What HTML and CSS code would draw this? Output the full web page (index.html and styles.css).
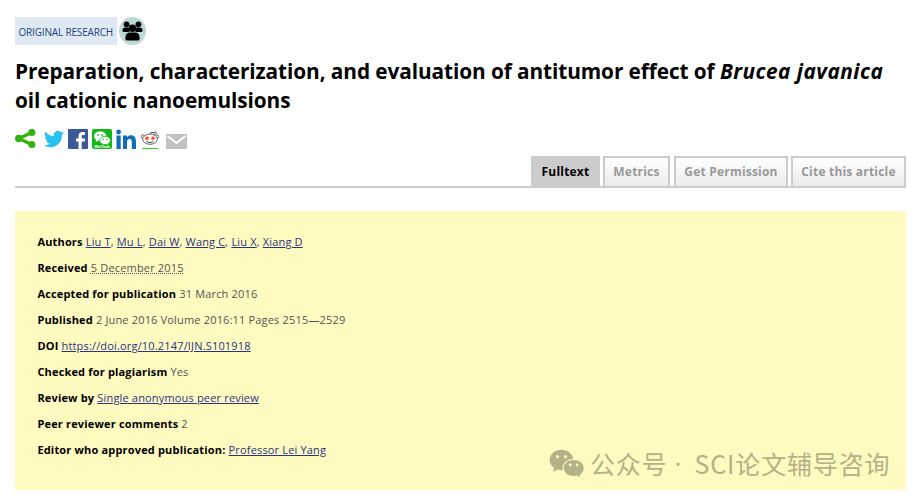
FILE: index.html
```
<!DOCTYPE html>
<html lang="en">
<head>
  <meta charset="UTF-8">
  <title>Preparation, characterization, and evaluation of antitumor effect of Brucea javanica oil cationic nanoemulsions</title>
  <meta name="viewport" content="width=device-width, initial-scale=1">
  <link rel="stylesheet" href="styles.css">
</head>
<body>
  <div class="article">
    <div class="article-type">
      <span class="type-label">ORIGINAL RESEARCH</span>
      <svg class="type-icon" viewBox="0 0 27 28">
        <ellipse cx="13.5" cy="14" rx="13.5" ry="14" fill="#bcd8d7"/>
        <circle cx="7.6" cy="7.3" r="2.9"/>
        <circle cx="19.4" cy="7.3" r="2.9"/>
        <path d="M3.400 13.500q0-3 3-3h3.200l1 4.500H5q-1.600 0-1.600-1.500zM23.600 13.500q0-3-3-3h-3.200l-1 4.500H22q1.600 0 1.600-1.500z"/>
        <circle cx="13.5" cy="11.3" r="3.800"/>
        <path d="M6.300 21.500q0-5.500 4-5.900h6.400q4 .4 4 5.900 0 2-1.700 2H8q-1.700 0-1.700-2z"/>
      </svg>
    </div>

    <h1>Preparation, characterization, and evaluation of antitumor effect of <i>Brucea javanica</i><br>oil cationic nanoemulsions</h1>

    <div class="share">
      <svg class="share-nodes" width="21" height="21" viewBox="0 0 21 21" fill="#33b30f">
        <path d="M16.500 3.500L4 9.500l12.500 6" fill="none" stroke="#33b30f" stroke-width="3.200"/>
        <circle cx="16.800" cy="3.500" r="3.600"/>
        <circle cx="3.800" cy="9.500" r="3.800"/>
        <circle cx="16.800" cy="15.500" r="3.600"/>
      </svg>
      <svg class="twitter" width="20" height="20" viewBox="0 0 24 24" fill="#29c0f2">
        <path d="M24 4.560a9.800 9.800 0 0 1-2.830.78 4.930 4.930 0 0 0 2.170-2.730 9.900 9.900 0 0 1-3.130 1.200 4.920 4.920 0 0 0-8.380 4.480A13.980 13.980 0 0 1 1.670 3.150a4.930 4.930 0 0 0 1.520 6.570 4.900 4.900 0 0 1-2.230-.61c-.05 2.280 1.580 4.410 3.950 4.890a4.900 4.900 0 0 1-2.220.08 4.930 4.930 0 0 0 4.600 3.420A9.900 9.900 0 0 1 0 19.540a13.940 13.940 0 0 0 7.550 2.210c9.140 0 14.310-7.720 13.990-14.640A10 10 0 0 0 24 4.560z"/>
      </svg>
      <svg width="20" height="20" viewBox="0 0 20 20">
        <rect width="20" height="20" rx="1" fill="#3b5998"/>
        <path d="M10.500 20v-7.500H8V9.500h2.500V7.200C10.500 4.500 12 3 14.500 3H17v3h-1.700c-1.200 0-1.600.5-1.600 1.600v1.900H17l-.5 3h-2.800V20z" fill="#fff"/>
      </svg>
      <svg width="20" height="20" viewBox="0 0 20 20">
        <rect width="20" height="20" rx="2" fill="#13b919"/>
        <path d="M8.200 2.500c-3.400 0-6.100 2.100-6.100 4.700 0 1.500.9 2.800 2.200 3.700l-.5 2 2.200-1.200 2.300.2c3.300 0 6-2.100 6-4.700S11.600 2.500 8.200 2.500z" fill="#fff"/>
        <path d="M13 7.300c-3 0-5.400 1.800-5.400 4.100s2.400 4.200 5.400 4.200l1.800-.2 2 1-.5-1.700c1.300-.8 2.100-2 2.100-3.300 0-2.300-2.400-4.100-5.400-4.100z" fill="#fff" stroke="#13b919" stroke-width=".8"/>
        <circle cx="6.200" cy="5.900" r=".9" fill="#13b919"/>
        <circle cx="10.300" cy="5.900" r=".9" fill="#13b919"/>
        <circle cx="11.300" cy="10.500" r=".7" fill="#13b919"/>
        <circle cx="15" cy="10.500" r=".7" fill="#13b919"/>
        <text x="10" y="19" class="wechat-name">WeChat</text>
      </svg>
      <svg width="20" height="20" viewBox="0 0 20 20" fill="#0f6fb8">
        <circle cx="2.600" cy="3" r="2.400"/>
        <path d="M.5 6.500h4.200V20H.5zM7 6.500h4v1.900C11.700 7.200 13 6.300 14.700 6.300c4 0 5.300 2.700 5.300 6.500V20h-4.200v-6.500c0-2-.4-3.400-2.200-3.400-2 0-2.600 1.500-2.600 3.400V20H7z"/>
      </svg>
      <svg class="reddit" width="20" height="20" viewBox="0 0 20 20">
        <path d="M10.200 5.300l.9-2 3.300.5" fill="none" stroke="#444" stroke-width="1"/>
        <circle cx="15.300" cy="4" r="1.100" fill="#fff" stroke="#555" stroke-width=".8"/>
        <circle cx="3" cy="7.500" r="1.700" fill="#fff" stroke="#555" stroke-width=".9"/>
        <circle cx="17" cy="7.500" r="1.700" fill="#fff" stroke="#555" stroke-width=".9"/>
        <ellipse cx="10" cy="10.200" rx="7.300" ry="5.100" fill="#fff" stroke="#555" stroke-width=".9"/>
        <circle cx="7" cy="9.300" r="1.700" fill="#ff4a1c"/>
        <circle cx="13" cy="9.300" r="1.700" fill="#ff4a1c"/>
        <path d="M6.500 12.600q3.500 2 7 0" fill="none" stroke="#444" stroke-width="1"/>
        <path d="M2 19h16v1H2z" fill="#2bd42b"/>
      </svg>
      <svg class="mail" width="21" height="15" viewBox="0 0 21 15">
        <rect width="21" height="15" rx="1" fill="#c1c1c1"/>
        <path d="M1.500 2l9 7 9-7" fill="none" stroke="#fff" stroke-width="2"/>
      </svg>
    </div>

    <div class="tabs">
      <a class="tab tab-full active">Fulltext</a>
      <a class="tab tab-metrics">Metrics</a>
      <a class="tab tab-permission">Get Permission</a>
      <a class="tab tab-cite">Cite this article</a>
    </div>

    <div class="info">
      <p><b>Authors</b> <a href="#">Liu T</a>, <a href="#">Mu L</a>, <a href="#">Dai W</a>, <a href="#">Wang C</a>, <a href="#">Liu X</a>, <a href="#">Xiang D</a></p>
      <p><b>Received</b> <span class="date">5 December 2015</span></p>
      <p><b>Accepted for publication</b> 31 March 2016</p>
      <p><b>Published</b> 2 June 2016 Volume 2016:11 Pages 2515—2529</p>
      <p><b>DOI</b> <a href="#">https://doi.org/10.2147/IJN.S101918</a></p>
      <p><b>Checked for plagiarism</b> Yes</p>
      <p><b>Review by</b> <a href="#">Single anonymous peer review</a></p>
      <p><b>Peer reviewer comments</b> 2</p>
      <p><b>Editor who approved publication:</b> <a href="#">Professor Lei Yang</a></p>
    </div>
  </div>

  <div class="watermark" lang="zh-CN">
    <svg width="36" height="30" viewBox="0 0 36 30">
      <path d="M12.500.8C5.900.8.700 5.400.700 11c0 3.200 1.700 6 4.400 7.900L4.200 23l4.500-2.400 3.800.6C19 21.200 24.300 16.600 24.300 11S19 .8 12.500.8z" fill="#b5b187"/>
      <path d="M24.700 10.300c-6 0-10.600 3.900-10.600 8.700s4.600 8.700 10.600 8.700l3.500-.5 4 2-.9-3.300c2.600-1.600 4-4.100 4-6.900 0-4.800-4.700-8.700-10.600-8.700z" fill="#b5b187" stroke="#fffabf" stroke-width="1.200"/>
      <g fill="#fffabf">
        <circle cx="8.500" cy="7.700" r="1.600"/>
        <circle cx="16.500" cy="7.700" r="1.600"/>
        <circle cx="21.200" cy="16" r="1.400"/>
        <circle cx="28.200" cy="16" r="1.400"/>
      </g>
    </svg>
    <span class="wm-account">公众号</span>
    <span class="wm-dot">·</span>
    <span class="wm-name">SCI论文辅导咨询</span>
  </div>
</body>
</html>
```
FILE: styles.css
```
body {
  margin: 0;
  background: #fff;
  font-family: 'Open Sans', 'Noto Sans', sans-serif;
  color: #555;
  overflow: hidden;
}
.article {
  width: 891px;
  padding: 17px 0 0 15px;
}
.article-type {
  display: flex;
  gap: 2px;
  height: 28px;
}
.type-label {
  box-sizing: border-box;
  width: 102px;
  padding-left: 3.5px;
  background: #dfe9f4;
  color: #1b4478;
  font-size: 10px;
  letter-spacing: -0.17px;
  line-height: 31px;
  white-space: nowrap;
}
.type-icon {
  width: 27px;
  height: 28px;
}
h1 {
  margin: 12px 0 0;
  color: #000;
  font-size: 20.8px;
  font-weight: 700;
  letter-spacing: -0.085px;
  line-height: 29px;
  white-space: nowrap;
}
h1 i {
  letter-spacing: 0.48px;
}
.share {
  display: flex;
  gap: 4px;
  height: 22px;
  margin-top: 14px;
}
.share-nodes {
  margin-right: 4px;
}
.share svg {
  flex: none;
}
.wechat-name {
  fill: #fff;
  font-size: 4px;
  font-weight: 700;
  text-anchor: middle;
}
.mail {
  margin: 5px 0 0 2px;
}
.tabs {
  display: flex;
  justify-content: flex-end;
  height: 30px;
  margin-top: 5px;
  border-bottom: 2px solid #ccc;
}
.tab {
  box-sizing: border-box;
  border: 2px solid #ccc;
  border-bottom: 0;
  background: linear-gradient(#fff, #ebebeb);
  color: #999;
  font-size: 12px;
  font-weight: 700;
  letter-spacing: 0.2px;
  line-height: 28px;
  text-align: center;
  white-space: nowrap;
}
.tab.active {
  background: #ccc;
  color: #000;
}
.tab-full {
  width: 69px;
  margin-right: 3px;
}
.tab-metrics {
  width: 67px;
  margin-right: 4px;
}
.tab-permission {
  width: 114px;
  margin-right: 3px;
}
.tab-cite {
  width: 115px;
}
.info {
  box-sizing: border-box;
  height: 279px;
  margin-top: 23px;
  padding: 18px 22.4px;
  background: #fffabf;
  font-size: 11px;
  letter-spacing: 0.17px;
  line-height: 26px;
}
.info p {
  margin: 0;
}
.info b {
  color: #000;
}
.info a {
  color: #273582;
}
.date {
  text-decoration: underline dotted;
}
/* account mark lies over the info panel */
.watermark {
  position: absolute;
  left: 549px;
  top: 449px;
  display: flex;
  height: 30px;
  color: #b5b187;
  font-family: 'Noto Sans CJK SC', sans-serif;
  font-size: 25px;
  letter-spacing: 0.85px;
  line-height: 28px;
  white-space: nowrap;
}
.wm-account {
  margin-left: 5px;
}
.wm-dot {
  width: 22px;
  font-family: 'Open Sans', sans-serif;
  text-align: center;
}
.wm-name {
  margin-left: 5px;
}
```
